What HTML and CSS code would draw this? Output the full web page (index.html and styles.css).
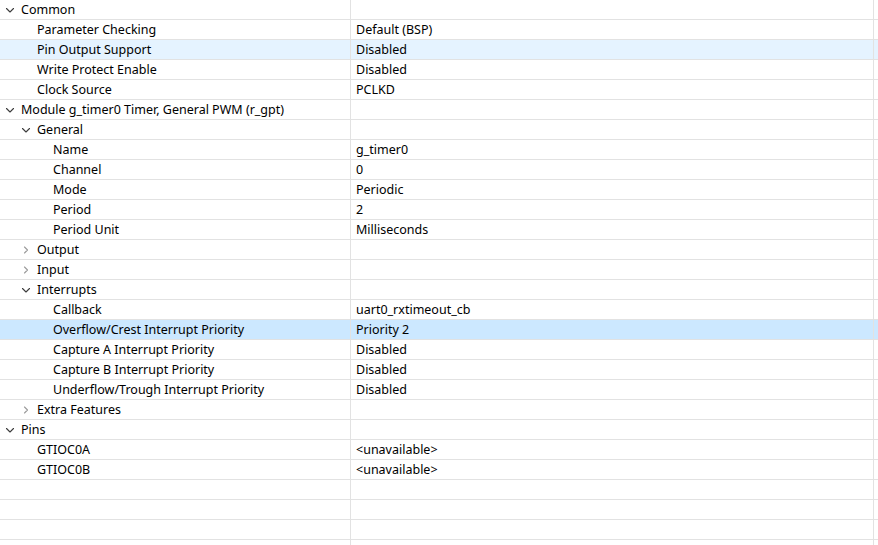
FILE: index.html
```html
<!DOCTYPE html>
<html>
<head>
<meta charset="utf-8">
<link rel="stylesheet" href="styles.css">
</head>
<body>
<div class="tree">
  <div class="row"><div class="c1 l0"><svg class="tw" viewBox="0 0 16 16"><polyline class="exp" points="4.5,6.5 8,10 11.5,6.5"/></svg><span>Common</span></div><div class="c2"></div></div>
  <div class="row"><div class="c1 l1"><span class="sp"></span><span>Parameter Checking</span></div><div class="c2">Default (BSP)</div></div>
  <div class="row hover"><div class="c1 l1"><span class="sp"></span><span>Pin Output Support</span></div><div class="c2">Disabled</div></div>
  <div class="row"><div class="c1 l1"><span class="sp"></span><span>Write Protect Enable</span></div><div class="c2">Disabled</div></div>
  <div class="row"><div class="c1 l1"><span class="sp"></span><span>Clock Source</span></div><div class="c2">PCLKD</div></div>
  <div class="row"><div class="c1 l0"><svg class="tw" viewBox="0 0 16 16"><polyline class="exp" points="4.5,6.5 8,10 11.5,6.5"/></svg><span>Module g_timer0 Timer, General PWM (r_gpt)</span></div><div class="c2"></div></div>
  <div class="row"><div class="c1 l1"><svg class="tw" viewBox="0 0 16 16"><polyline class="exp" points="4.5,6.5 8,10 11.5,6.5"/></svg><span>General</span></div><div class="c2"></div></div>
  <div class="row"><div class="c1 l2"><span class="sp"></span><span>Name</span></div><div class="c2">g_timer0</div></div>
  <div class="row"><div class="c1 l2"><span class="sp"></span><span>Channel</span></div><div class="c2">0</div></div>
  <div class="row"><div class="c1 l2"><span class="sp"></span><span>Mode</span></div><div class="c2">Periodic</div></div>
  <div class="row"><div class="c1 l2"><span class="sp"></span><span>Period</span></div><div class="c2">2</div></div>
  <div class="row"><div class="c1 l2"><span class="sp"></span><span>Period Unit</span></div><div class="c2">Milliseconds</div></div>
  <div class="row"><div class="c1 l1"><svg class="tw" viewBox="0 0 16 16"><polyline class="col" points="6.5,5 9.5,8 6.5,11"/></svg><span>Output</span></div><div class="c2"></div></div>
  <div class="row"><div class="c1 l1"><svg class="tw" viewBox="0 0 16 16"><polyline class="col" points="6.5,5 9.5,8 6.5,11"/></svg><span>Input</span></div><div class="c2"></div></div>
  <div class="row"><div class="c1 l1"><svg class="tw" viewBox="0 0 16 16"><polyline class="exp" points="4.5,6.5 8,10 11.5,6.5"/></svg><span>Interrupts</span></div><div class="c2"></div></div>
  <div class="row"><div class="c1 l2"><span class="sp"></span><span>Callback</span></div><div class="c2">uart0_rxtimeout_cb</div></div>
  <div class="row selected"><div class="c1 l2"><span class="sp"></span><span>Overflow/Crest Interrupt Priority</span></div><div class="c2">Priority 2</div></div>
  <div class="row"><div class="c1 l2"><span class="sp"></span><span>Capture A Interrupt Priority</span></div><div class="c2">Disabled</div></div>
  <div class="row"><div class="c1 l2"><span class="sp"></span><span>Capture B Interrupt Priority</span></div><div class="c2">Disabled</div></div>
  <div class="row"><div class="c1 l2"><span class="sp"></span><span>Underflow/Trough Interrupt Priority</span></div><div class="c2">Disabled</div></div>
  <div class="row"><div class="c1 l1"><svg class="tw" viewBox="0 0 16 16"><polyline class="col" points="6.5,5 9.5,8 6.5,11"/></svg><span>Extra Features</span></div><div class="c2"></div></div>
  <div class="row"><div class="c1 l0"><svg class="tw" viewBox="0 0 16 16"><polyline class="exp" points="4.5,6.5 8,10 11.5,6.5"/></svg><span>Pins</span></div><div class="c2"></div></div>
  <div class="row"><div class="c1 l1"><span class="sp"></span><span>GTIOC0A</span></div><div class="c2">&lt;unavailable&gt;</div></div>
  <div class="row"><div class="c1 l1"><span class="sp"></span><span>GTIOC0B</span></div><div class="c2">&lt;unavailable&gt;</div></div>
  <div class="row"><div class="c1"></div><div class="c2"></div></div>
  <div class="row"><div class="c1"></div><div class="c2"></div></div>
  <div class="row"><div class="c1"></div><div class="c2"></div></div>
  <div class="row"><div class="c1"></div><div class="c2"></div></div>
</div>
</body>
</html>
```
FILE: styles.css
```css
html, body {
  margin: 0;
  padding: 0;
  background: #ffffff;
  overflow: hidden;
}
.tree {
  width: 878px;
  font-family: "Noto Sans", "Open Sans", sans-serif;
  font-size: 12.5px;
  color: #000000;
}
.row {
  display: flex;
  height: 19px;
  border-bottom: 1px solid #e2e2e2;
  line-height: 19px;
  white-space: nowrap;
}
.row.hover { background: #e5f3ff; }
.row.selected { background: #cce8ff; }
.c1 {
  width: 351px;
  flex: none;
  display: flex;
  align-items: center;
  box-sizing: border-box;
  border-right: 1px solid #e2e2e2;
  overflow: hidden;
}
.c2 {
  width: 523px;
  flex: none;
  box-sizing: border-box;
  border-right: 1px solid #e2e2e2;
  padding-left: 5px;
}
.l0 { padding-left: 2px; }
.l1 { padding-left: 18px; }
.l2 { padding-left: 34px; }
.tw, .sp {
  width: 16px;
  height: 16px;
  flex: none;
  margin-right: 3px;
}
.sp { display: inline-block; }
.tw polyline {
  fill: none;
  stroke-width: 1.1;
  stroke-linecap: round;
  stroke-linejoin: round;
}
.tw .exp { stroke: #3c3c3c; }
.tw .col { stroke: #9a9a9a; }
```
